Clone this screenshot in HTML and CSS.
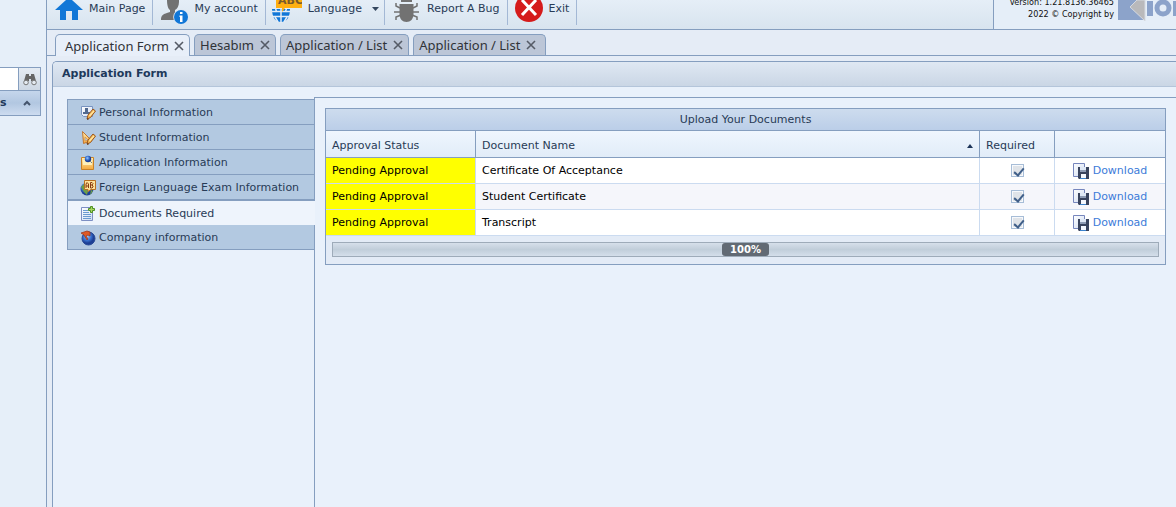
FILE: index.html
```html
<!DOCTYPE html>
<html lang="en">
<head>
<meta charset="utf-8">
<title>Application Form</title>
<link rel="stylesheet" href="styles.css">
</head>
<body>
<svg class="defs" aria-hidden="true">
  <defs>
    <linearGradient id="gold" x1="0" y1="0" x2="0" y2="1"><stop offset="0" stop-color="#fff0b8"/><stop offset="1" stop-color="#f5a93c"/></linearGradient>
    <linearGradient id="paper" x1="0" y1="0" x2="1" y2="1"><stop offset="0" stop-color="#ffffff"/><stop offset="1" stop-color="#cfdcf2"/></linearGradient>
    <radialGradient id="ball" cx="0.4" cy="0.35"><stop offset="0" stop-color="#9cc8fb"/><stop offset="0.6" stop-color="#3971cf"/><stop offset="1" stop-color="#1d3f95"/></radialGradient>
    <symbol id="pencil" viewBox="0 0 16 16"><path d="M7 14l1-4 5-6 2.500 2-5 6.500z" fill="#f6b955" stroke="#9a541b"/><path d="M9.500 11l4.500-5" stroke="#ffe6a0" stroke-width="1.200"/><path d="M7 15l.5-2 1.500 1.200z" fill="#5b3213"/></symbol>
    <symbol id="save" viewBox="0 0 16 16">
      <path d="M.5.5h11v13H.5z" fill="url(#paper)" stroke="#7686bd"/>
      <path d="M5 4h11v12H6l-1-1z" fill="#38435d"/>
      <path d="M7 4h6v5H7z" fill="#dfe8f5"/><path d="M7 7h6v2H7z" fill="#8e9cb5"/>
      <path d="M8 11h5v4H8z" fill="#f4f8ff"/><path d="M7 15h6v1H7z" fill="#3b82cc"/>
    </symbol>
    <symbol id="cross" viewBox="0 0 10 10"><path d="M1 1l8 8M9 1L1 9" fill="none" stroke="#555b66" stroke-width="1.600"/></symbol>
  </defs>
</svg>
<div class="app">
  <aside class="sidebar">
    <div class="search">
      <input class="search-input" type="text" aria-label="Search">
      <button class="search-button" type="button" aria-label="Find">
        <svg width="14" height="13" viewBox="0 0 14 13"><path d="M3 1h3v2h2V1h3l2 7H8V6H6v2H1z" fill="#656565"/><circle cx="3" cy="9.500" r="2.300" fill="#e4eaf1" stroke="#777"/><circle cx="11" cy="9.500" r="2.300" fill="#e4eaf1" stroke="#777"/></svg>
      </button>
    </div>
    <button class="group" type="button"><span>s</span>
      <svg width="8" height="6" viewBox="0 0 8 6"><path d="M1 5l3-3 3 3" fill="none" stroke="#44546c" stroke-width="2"/></svg>
    </button>
  </aside>

  <div class="main">
    <header class="topbar">
      <nav class="toolbar">
        <button class="tool" type="button"><svg width="28" height="20" viewBox="0 0 28 20"><path d="M0 10L11 0h6l11 10h-5v10h-6v-9h-6v9H5V10z" fill="#1177d7"/></svg>Main Page</button>
        <button class="tool" type="button"><svg width="28" height="24" viewBox="0 0 28 24"><path d="M7 0h12v2c0 4-2 7-4 8v2l4 2-2 6H1c0-5 2-6 9-8v-2C8 9 7 5 7 0z" fill="#727272"/><circle cx="21" cy="17" r="7.800" fill="#dfe8f2"/><circle cx="21" cy="17" r="7" fill="#1177d7"/><path d="M20 12h2.500v2H20zM19.500 15.500h3V22H20v-5h-.5z" fill="#fff"/></svg>My account</button>
        <button class="tool language" type="button"><svg width="30" height="24" viewBox="0 0 30 24"><path d="M0 9h18c0 9-4 13-9 13S0 18 0 9z" fill="#1177d7"/><path d="M0 11.500h18M0 16.500h18M9 8v15" stroke="#e5edf6" stroke-width="1.500" fill="none"/><path d="M3 17l3 5M15 17l-3 5M3.500 8l1 4M14.500 8l-1 4" stroke="#e5edf6" stroke-width="1.500" fill="none"/><path d="M4 0h26v8H13l-3 4V8H4z" fill="#ffb012"/><text x="6" y="4" class="abc">ABC</text></svg>Language
          <svg class="caret" width="7" height="4" viewBox="0 0 7 4"><path d="M0 0h7L3.500 4z" fill="#34475f"/></svg></button>
        <button class="tool bug" type="button"><svg width="25" height="24" viewBox="0 0 25 24"><path d="M7 0h11v2H7z" fill="#727272"/><path d="M5.500 4h14v10c0 5-3 8-7 8s-7-3-7-8z" fill="#727272"/><path d="M6 8L2 6V3M19 8l4-2V3M6 12H0M19 12h6M7 15l-5 2v3M18 15l5 2v3" fill="none" stroke="#727272" stroke-width="1.500"/></svg>Report A Bug</button>
        <button class="tool" type="button"><svg width="28" height="24" viewBox="0 0 28 24"><circle cx="14" cy="8" r="14" fill="#d51b1b"/><path d="M7 0l14 15M21 0L7 15" stroke="#fff" stroke-width="3"/></svg>Exit</button>
      </nav>
      <div class="brand">
        <p class="copyright">Version: 1.21.8136.36465<br>2022 © Copyright by</p>
        <svg class="logo" width="58" height="21" viewBox="0 0 58 21"><path d="M0 0h27v20H0z" fill="#8ca3ca"/><path d="M19 0L12 7l15 14V0z" fill="#b9b9bb" stroke="#d5d9e0"/><path d="M29 1h6v15h-6z" fill="#8ca3ca"/><circle cx="45" cy="8" r="6" fill="none" stroke="#8ca3ca" stroke-width="5"/><path d="M55 1h3v15h-3z" fill="#8ca3ca"/></svg>
      </div>
    </header>

    <div class="tabs">
      <div class="tab tab-active"><span>Application Form</span><button type="button" aria-label="Close Application Form"><svg width="10" height="10"><use href="#cross"/></svg></button></div>
      <div class="tab"><span>Hesabım</span><button type="button" aria-label="Close Hesabım"><svg width="10" height="10"><use href="#cross"/></svg></button></div>
      <div class="tab"><span>Application / List</span><button type="button" aria-label="Close list"><svg width="10" height="10"><use href="#cross"/></svg></button></div>
      <div class="tab"><span>Application / List</span><button type="button" aria-label="Close list"><svg width="10" height="10"><use href="#cross"/></svg></button></div>
    </div>

    <section class="panel">
      <h1 class="panel-title">Application Form</h1>
      <div class="panel-body">
        <nav class="steps">
          <button class="step" type="button"><svg width="16" height="16" viewBox="0 0 16 16"><path d="M1.500 1.500h11v10h-9l-2-2z" fill="url(#paper)" stroke="#7893bf"/><path d="M5 3h3v4h2v2H3V7h2z" fill="#51698f"/><use href="#pencil" width="16" height="16"/></svg>Personal Information</button>
          <button class="step" type="button"><svg width="16" height="16" viewBox="0 0 16 16"><path d="M2.500 1.500l9 9-8 3z" fill="url(#gold)" stroke="#c07532"/><path d="M5 7l3 3-3 1z" fill="#b4c8e0" stroke="#d18a40" stroke-width=".6"/><use href="#pencil" width="16" height="16"/></svg>Student Information</button>
          <button class="step" type="button"><svg width="16" height="16" viewBox="0 0 16 16"><path d="M1.500 2.500h12v12h-12z" fill="url(#gold)" stroke="#c98126"/><path d="M3 5h9v5H3z" fill="#ffefb9"/><circle cx="8" cy="4" r="3.200" fill="url(#ball)"/><path d="M10 6l2 2" stroke="#75808d"/></svg>Application Information</button>
          <button class="step" type="button"><svg width="16" height="16" viewBox="0 0 16 16"><circle cx="7" cy="9" r="6.500" fill="url(#ball)"/><path d="M1 7l4-4v5l3 3-1 4-3-3zM11 10l2 1-3 4z" fill="#6e9e46"/><path d="M4.500.5h11v9H11l-3 2v-2H4.500z" fill="#ffe39a" stroke="#b96f22"/><path d="M6 8V4l1-1.500L8.500 4v4M6 6h2.500M10.500 8V2.500H12l1 1-1 1.500 1 1v1l-1 1zM10.500 5H12" fill="none" stroke="#8a3d12"/></svg>Foreign Language Exam Information</button>
          <button class="step step-active" type="button"><svg width="16" height="16" viewBox="0 0 16 16"><path d="M1.500 1.500h11v13h-11z" fill="url(#paper)" stroke="#7d8fc3"/><path d="M3 4.500h5M3 6.500h6M3 8.500h8M3 10.500h8M3 12.500h8" stroke="#6b9ad0"/><path d="M10.500.5h2v2h2v2h-2v2h-2v-2h-2v-2h2z" fill="#a6d760" stroke="#4f9025"/></svg>Documents Required</button>
          <button class="step" type="button"><svg width="16" height="16" viewBox="0 0 16 16"><circle cx="8.500" cy="8.500" r="6.500" fill="url(#ball)" stroke="#284a96"/><path d="M1 3l6-2 3 1v4L8 5l-2 1 2 3-1 1-3-5z" fill="#df5a26" stroke="#9c3417" stroke-width=".7"/></svg>Company information</button>
        </nav>
        <div class="content">
          <div class="grid">
            <h2 class="grid-title">Upload Your Documents</h2>
            <table class="docs">
              <colgroup><col class="c-status"><col><col class="c-required"><col class="c-action"></colgroup>
              <thead><tr><th>Approval Status</th><th><span class="sorted">Document Name<svg width="6" height="4" viewBox="0 0 6 4"><path d="M3 0l3 4H0z" fill="#1c3459"/></svg></span></th><th>Required</th><th></th></tr></thead>
              <tbody>
                <tr><td class="pending">Pending Approval</td><td>Certificate Of Acceptance</td><td class="check"><input type="checkbox" checked aria-label="Certificate Of Acceptance required"></td><td class="action"><a href="#"><svg width="16" height="16"><use href="#save"/></svg>Download</a></td></tr>
                <tr><td class="pending">Pending Approval</td><td>Student Certificate</td><td class="check"><input type="checkbox" checked aria-label="Student Certificate required"></td><td class="action"><a href="#"><svg width="16" height="16"><use href="#save"/></svg>Download</a></td></tr>
                <tr><td class="pending">Pending Approval</td><td>Transcript</td><td class="check"><input type="checkbox" checked aria-label="Transcript required"></td><td class="action"><a href="#"><svg width="16" height="16"><use href="#save"/></svg>Download</a></td></tr>
              </tbody>
            </table>
            <div class="grid-footer"><div class="splitter"><span class="percent">100%</span></div></div>
          </div>
        </div>
      </div>
    </section>
  </div>
</div>
</body>
</html>
```
FILE: styles.css
```css
* { box-sizing: border-box; }
body { margin: 0; overflow: hidden; background: #e9f1fb; color: #283b56; font: 11px/16px Verdana, "DejaVu Sans", sans-serif; }
button { margin: 0; padding: 0; border: 0; background: none; color: inherit; font: inherit; }
svg { display: block; flex: none; }
h1, h2, p { margin: 0; }
.defs { position: absolute; width: 0; height: 0; }
.app { display: flex; min-height: 100vh; }

.sidebar { flex: none; width: 46px; padding: 67px 5px 0 0; background: #e6eff9; }
.search { display: flex; height: 23px; border: 1px solid #859ebf; border-width: 1px 1px 0 0; }
.search-input { flex: 1; min-width: 0; padding: 0; border: 0; background: #fff; }
.search-button { display: flex; align-items: center; justify-content: center; width: 22px; border-left: 1px solid #859ebf; background: linear-gradient(#e4ebf3, #ced8e4); }
.group { display: flex; align-items: center; justify-content: space-between; width: 100%; height: 26px; padding-right: 9px; border: 1px solid #859ebf; border-left: 0; background: linear-gradient(#c5d6ec, #b2c7e1 50%, #cddcf0); color: #1e395b; font-weight: bold; }

.main { display: flex; flex: 1; flex-direction: column; min-width: 0; border-left: 1px solid #859ebf; background: #e5ecf6; }
.topbar { display: flex; height: 30px; overflow: hidden; border-bottom: 1px solid #859ebf; background: #e5eef8; }
.toolbar { display: flex; flex: 1; padding-left: 1px; background: linear-gradient(#e5eef7, #d8e4ef); }
.tool { display: flex; gap: 6px; height: 25px; padding: 0 7px; border-right: 1px solid #a3b8d5; line-height: 18px; white-space: nowrap; }
.language { padding: 0 5px 0 6px; }
.bug { gap: 8px; padding: 0 7px 0 9px; }
.caret { margin: 7px 0 0 4px; }
.abc { fill: #775a2b; font: bold 11px "DejaVu Sans", sans-serif; }
.brand { display: flex; gap: 4px; width: 183px; justify-content: flex-end; border-left: 1px solid #859ebf; }
.copyright { display: flex; align-items: flex-end; height: 20px; color: #111; font: 9px/12px Tahoma, "DejaVu Sans Condensed", sans-serif; text-align: right; white-space: nowrap; }

.tabs { display: flex; gap: 4px; height: 22px; margin-top: 4px; padding-left: 8px; border-bottom: 1px solid #859ebf; }
.tab { display: flex; align-items: center; gap: 6px; height: 21px; padding: 0 5px; border: 1px solid #859ebf; border-bottom: 0; border-radius: 5px 5px 0 0; background: #bcc6d7; color: #303338; font: 13px/20px "Segoe UI", "Noto Sans", sans-serif; white-space: nowrap; }
.tab-active { gap: 5px; height: 22px; padding: 0 5px 0 9px; background: #e8eff9; }
.tab:last-child { padding-right: 9px; }

.panel { display: flex; flex: 1; flex-direction: column; margin: 5px 0 0 5px; border: 1px solid #859ebf; border-width: 1px 0 0 1px; border-radius: 5px 0 0 0; background: #e9f1fb; }
.panel-title { padding: 4px 9px; border-bottom: 1px solid #b4c5da; border-radius: 4px 0 0 0; background: linear-gradient(#dfe8f3, #cad6e5); color: #1e395b; font: bold 11px/16px Verdana, "DejaVu Sans", sans-serif; }
.panel-body { display: flex; flex: 1; padding: 10px 0 0 14px; }
.steps { position: relative; flex: none; width: 248px; margin: 2px -1px 0 0; }
.step { display: flex; align-items: center; gap: 3px; width: 100%; height: 25px; padding: 1px 0 0 12px; border: 1px solid #859ebf; border-width: 1px 1px 0 1px; background: #b3c9e1; white-space: nowrap; }
.step-active { height: 26px; border-width: 2px 0 0 1px; background: #eef4fc; }
.step:last-child { border-width: 0 1px 1px 1px; }
.content { flex: 1; min-width: 0; padding: 10px; border: 1px solid #859ebf; border-width: 1px 0 0 1px; }

.grid { border: 1px solid #859ebf; background: #e3ebf6; }
.grid-title { height: 22px; border-bottom: 1px solid #859ebf; background: linear-gradient(#cddcee, #bbcee8); font: 11px/21px Verdana, "DejaVu Sans", sans-serif; text-align: center; }
.docs { width: 100%; border-collapse: separate; border-spacing: 0; table-layout: fixed; }
.c-status { width: 150px; }
.c-required { width: 75px; }
.c-action { width: 111px; }
.docs th { height: 27px; padding: 3px 6px 0; border: 1px solid #859ebf; border-width: 0 1px 1px 0; background: linear-gradient(#eff6fe, #e1ecf8); font-weight: normal; text-align: left; }
.docs td { height: 26px; padding: 1px 6px 0; border: 1px solid #cbdbf0; border-width: 0 1px 1px 0; background: #fff; color: #000; vertical-align: middle; }
.docs .c-action { width: 110px; }
.docs th:last-child, .docs td:last-child { border-right: 0; }
.docs tr:nth-child(2) td { background: #f5f6fb; }
.docs .pending, .docs tr:nth-child(2) .pending { background: #ff0; }
.sorted { display: flex; align-items: center; justify-content: space-between; }
.docs .check { padding: 0 6px; }
.check input { display: block; width: 13px; height: 13px; margin: 0 auto; appearance: none; border: 1px solid #a7bdd7; background: #dfe3e8; box-shadow: inset 0 0 0 1px #f7f9fc; position: relative; }
.check input:checked::after { content: ""; position: absolute; left: 4px; top: 1px; width: 4px; height: 8px; border: solid #405f89; border-width: 0 2px 2px 0; transform: rotate(40deg); }
.action a { display: flex; align-items: center; justify-content: center; gap: 4px; color: #3c7bd9; text-decoration: none; }
.grid-footer { padding: 6px; }
.splitter { display: flex; justify-content: center; height: 15px; margin-bottom: 1px; border: 1px solid #9eabb9; background: linear-gradient(#d6dfea, #c1ceda 50%, #d4deea); }
.percent { height: 13px; padding: 0 8px; border-radius: 3px; background: #626a74; color: #fff; font-size: 10px; font-weight: bold; line-height: 13px; }
```
